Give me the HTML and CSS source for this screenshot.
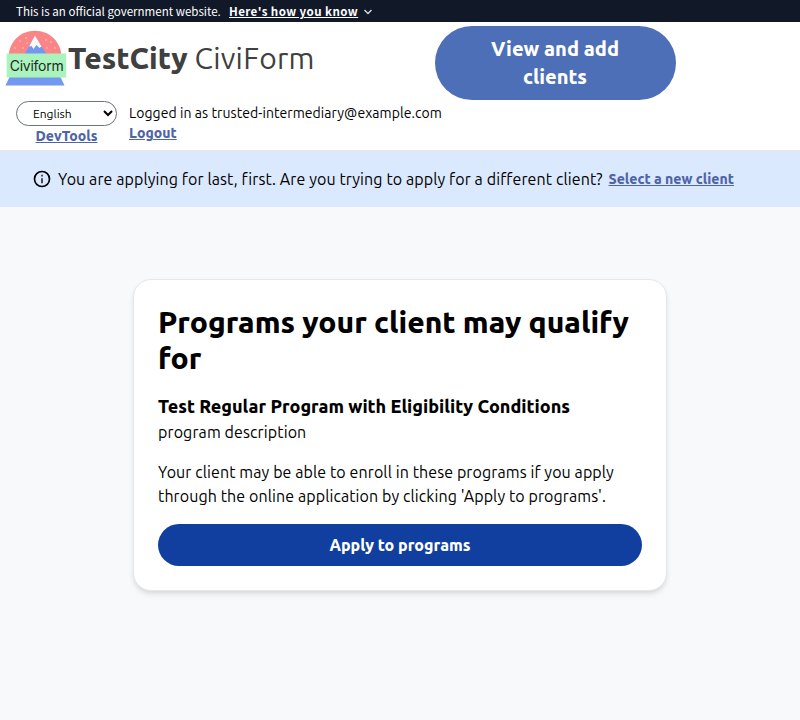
FILE: index.html
```html
<!DOCTYPE html>
<html lang="en">
<head>
<meta charset="utf-8">
<title>Programs your client may qualify for</title>
<link rel="stylesheet" href="styles.css">
</head>
<body>
<div class="gov-banner">
  <span class="gov-text">This is an official government website.</span>
  <a class="gov-link" href="#">Here's how you know</a>
  <svg class="gov-chevron" viewBox="0 0 10 8"><path d="M1.500 2 5 5.600 8.500 2" fill="none" stroke="#d5d8de" stroke-width="1.400"/></svg>
</div>
<header class="header">
  <div class="header-top">
    <a class="brand" href="#">
      <svg class="logo" viewBox="0 0 64 60">
        <path d="M4.500 30C4.500 14 16 2.700 31 2.700s26.500 11.300 26.500 27.300z" fill="#fb8486"/>
        <path d="M20 27 31 8l12 19z" fill="#7298f0"/>
        <path d="M25 18.500 31 7.500l6.500 11-2 1.500-3-3-3 4-2-3z" fill="#f7f7fa"/>
        <g fill="#fdd0d0"><circle cx="22" cy="10" r=".8"/><circle cx="16" cy="13" r=".8"/><circle cx="23" cy="15" r=".8"/><circle cx="11" cy="20" r=".8"/><circle cx="19" cy="20" r=".8"/><circle cx="42" cy="12" r=".8"/><circle cx="47" cy="14" r=".8"/><circle cx="43" cy="20" r=".8"/><circle cx="51" cy="20" r=".8"/></g>
        <path d="M6 48h50l4.500 9.500H1.500z" fill="#7298f0"/>
        <rect x="2.700" y="25.500" width="59.500" height="24" fill="#aaf3bc"/>
        <text class="logo-text" x="32.700" y="43" text-anchor="middle" textLength="54">Civiform</text>
      </svg>
      <span class="brand-name"><b class="brand-city">TestCity</b> <span class="brand-app">CiviForm</span></span>
    </a>
    <a class="clients-button" href="#"><span>View and add</span><span class="clients-line">clients</span></a>
  </div>
  <div class="header-bottom">
    <div class="tools">
      <select class="language"><option>English</option></select>
      <a class="link devtools" href="#">DevTools</a>
    </div>
    <div class="account">
      <span class="logged-in">Logged in as trusted-intermediary@example.com</span>
      <a class="link logout" href="#">Logout</a>
    </div>
  </div>
</header>
<div class="notice">
  <svg class="info" viewBox="0 0 24 24"><path d="M11.200 7h1.600v2h-1.600zM11.200 11h1.600v6h-1.600zM12 2a10 10 0 1 0 0 20 10 10 0 0 0 0-20zm0 18a8 8 0 1 1 0-16 8 8 0 0 1 0 16z"/></svg>
  <span class="notice-text">You are applying for last, first. Are you trying to apply for a different client?</span>
  <a class="link select-client" href="#">Select a new client</a>
</div>
<main class="card">
  <h1><span class="title-first">Programs your client may qualify</span> <span class="title-last">for</span></h1>
  <h2>Test Regular Program with Eligibility Conditions</h2>
  <p class="description">program description</p>
  <p class="enroll"><span class="enroll-first">Your client may be able to enroll in these programs if you apply</span><br><span class="enroll-last">through the online application by clicking 'Apply to programs'.</span></p>
  <a class="apply-button" href="#">Apply to programs</a>
</main>
</body>
</html>
```

FILE: styles.css
```css
* { box-sizing: border-box; }
body {
  margin: 0;
  min-height: 720px;
  background: #f8f9fb;
  color: #000;
  font: 16px/24px "Ubuntu", "Noto Sans", sans-serif;
}
h1, h2, p { margin: 0; }
span, a, h2, p { white-space: nowrap; }
.gov-banner {
  display: flex;
  align-items: center;
  height: 22px;
  padding-left: 16px;
  background: #111827;
  color: #fff;
  font: 11.550px/22px "Noto Sans CJK SC", sans-serif;
}
.gov-text { width: 213px; }
.gov-link { width: 129px; color: #fff; font-weight: 700; letter-spacing: 0.420px; text-underline-offset: 1px; }
.gov-chevron { width: 10px; height: 8px; margin-left: 5px; margin-top: 2px; }
.header { height: 129px; background: #fff; border-bottom: 1px solid #e5e7eb; }
.header-top { display: flex; justify-content: space-between; height: 79px; padding: 4px 124px 0 4px; }
.brand { display: flex; align-items: center; height: 64px; color: #404040; text-decoration: none; }
.logo { width: 64px; height: 60px; }
.logo-text { font: 14px "Inter", sans-serif; fill: #1c2b25; }
.brand-name { font-size: 30px; line-height: 36px; }
.brand-city { font-weight: 800; }
.brand-app { letter-spacing: 0.250px; }
.clients-button {
  display: flex;
  flex-direction: column;
  align-items: center;
  justify-content: center;
  width: 241px;
  height: 74px;
  padding-right: 1px;
  border-radius: 37px;
  background: #4c6fb7;
  color: #fff;
  font-size: 20px;
  font-weight: 800;
  line-height: 28px;
  text-decoration: none;
}
.header-bottom { display: flex; gap: 12px; padding-left: 16px; }
.tools { display: flex; flex-direction: column; align-items: center; width: 101px; }
.language {
  width: 101px;
  height: 25px;
  padding: 0 0 0 12px;
  border: 1px solid #6b7280;
  border-radius: 13px;
  background: #fff;
  color: #000;
  font: 12px "Ubuntu", "Noto Sans", sans-serif;
}
.link { color: #4f65a8; font-size: 14px; font-weight: 800; line-height: 20px; }
.account { display: flex; flex-direction: column; align-items: flex-start; padding-top: 2px; }
.logged-in { font-size: 14px; line-height: 20px; letter-spacing: 0.070px; }
.notice { display: flex; align-items: center; height: 56px; padding-left: 32px; background: #dbe9fe; }
.info { width: 20px; height: 20px; margin-right: 6px; }
.notice-text { width: 550.500px; letter-spacing: 0.098px; }
.card {
  width: 534px;
  height: 312px;
  margin: 72px auto 0 133px;
  padding: 24px;
  border: 1px solid #e5e7eb;
  border-radius: 18px;
  background: #fff;
  box-shadow: 0 4px 6px -1px rgba(0, 0, 0, .1), 0 2px 4px -1px rgba(0, 0, 0, .06);
}
h1 { font-size: 30px; font-weight: 800; line-height: 36px; }
h1 span { display: block; }
h2 { margin-top: 16px; font-size: 18px; font-weight: 800; line-height: 28px; }
.description { letter-spacing: 0.110px; }
.enroll { margin-top: 16px; letter-spacing: 0.095px; }
.apply-button {
  display: block;
  height: 42px;
  margin-top: 16px;
  border-radius: 21px;
  background: #113f9f;
  color: #fff;
  font-weight: 800;
  line-height: 42px;
  text-align: center;
  text-decoration: none;
}
```
